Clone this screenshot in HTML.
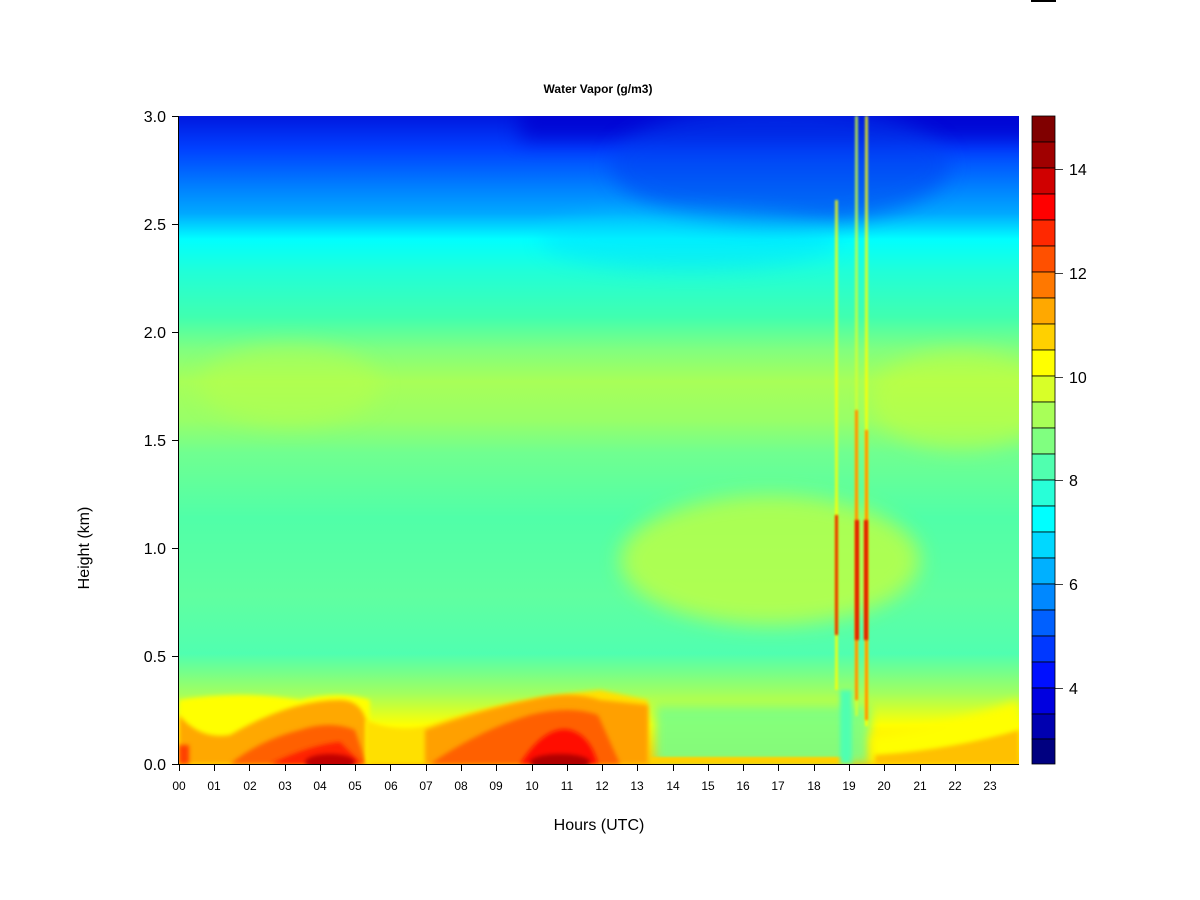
<!DOCTYPE html>
<html><head><meta charset="utf-8"><style>
body{margin:0;background:#fff;width:1200px;height:900px;overflow:hidden;font-family:"Liberation Sans",Arial,sans-serif}
</style></head><body>
<svg width="1200" height="900" xmlns="http://www.w3.org/2000/svg" style="position:absolute;left:0;top:0">
<defs>
<linearGradient id="base" x1="0" y1="0" x2="0" y2="1">
<stop offset="0" stop-color="#0018e0"/>
<stop offset="0.05" stop-color="#0040ff"/>
<stop offset="0.11" stop-color="#0080ff"/>
<stop offset="0.15" stop-color="#00a8ff"/>
<stop offset="0.19" stop-color="#00ffff"/>
<stop offset="0.24" stop-color="#20ffd8"/>
<stop offset="0.31" stop-color="#40ffb0"/>
<stop offset="0.36" stop-color="#80ff80"/>
<stop offset="0.41" stop-color="#a8ff58"/>
<stop offset="0.47" stop-color="#98ff68"/>
<stop offset="0.52" stop-color="#70ff90"/>
<stop offset="0.62" stop-color="#50ffa8"/>
<stop offset="0.74" stop-color="#60ffa0"/>
<stop offset="0.83" stop-color="#50ffb0"/>
<stop offset="0.89" stop-color="#a0ff60"/>
<stop offset="0.94" stop-color="#ffff00"/>
<stop offset="1" stop-color="#ffc000"/>
</linearGradient>
<filter id="b8" x="-50%" y="-150%" width="200%" height="400%"><feGaussianBlur stdDeviation="10"/></filter>
<filter id="b4" x="-20%" y="-50%" width="140%" height="200%"><feGaussianBlur stdDeviation="5"/></filter>
<filter id="b2" x="-50%" y="-50%" width="200%" height="200%"><feGaussianBlur stdDeviation="2"/></filter>
<filter id="b1" x="-80%" y="-20%" width="260%" height="140%"><feGaussianBlur stdDeviation="1"/></filter>
<clipPath id="pc"><rect x="179" y="116" width="840" height="648"/></clipPath>
</defs>
<g clip-path="url(#pc)">
<rect x="179" y="116" width="840" height="648" fill="url(#base)"/>
<rect x="520" y="100" width="520" height="40" fill="#0000d0" filter="url(#b8)" opacity="0.8"/>
<ellipse cx="780" cy="165" rx="170" ry="60" fill="#0040f0" filter="url(#b8)" opacity="0.55"/>
<ellipse cx="690" cy="240" rx="150" ry="30" fill="#00d8ff" filter="url(#b8)" opacity="0.4"/>
<ellipse cx="770" cy="560" rx="150" ry="65" fill="#d0ff30" filter="url(#b8)" opacity="0.7"/>
<ellipse cx="960" cy="400" rx="90" ry="50" fill="#c8ff38" filter="url(#b8)" opacity="0.5"/>
<ellipse cx="290" cy="385" rx="90" ry="40" fill="#b8ff48" filter="url(#b8)" opacity="0.5"/>
<rect x="655" y="705" width="215" height="58" fill="#78ff88" filter="url(#b4)" opacity="0.9"/>
<rect x="650" y="757" width="200" height="7" fill="#ffd000" filter="url(#b1)"/>
<path d="M870 764 L870 735 Q940 728 1019 700 L1019 764 Z" fill="#ffff00" filter="url(#b4)"/>
<path d="M875 764 L875 755 Q950 750 1019 730 L1019 764 Z" fill="#ffc000" filter="url(#b2)"/>
<path d="M179 764 L179 700 Q240 690 300 700 Q340 690 370 700 L370 764 Z" fill="#ffff00" filter="url(#b2)"/>
<path d="M179 764 L179 715 Q200 740 230 735 Q290 700 340 700 Q360 700 366 720 L366 764 Z" fill="#ffa800" filter="url(#b2)"/>
<path d="M230 764 Q260 740 300 730 Q330 720 355 730 L366 764 Z" fill="#ff6000" filter="url(#b2)"/>
<path d="M270 764 Q310 745 340 742 L362 764 Z" fill="#ff2000" filter="url(#b2)"/>
<ellipse cx="330" cy="762" rx="25" ry="8" fill="#c00000" filter="url(#b2)"/>
<path d="M366 764 L366 720 Q400 735 430 725 Q500 700 600 690 L648 700 L648 764 Z" fill="#ffe000" filter="url(#b2)"/>
<path d="M425 764 L425 730 Q480 710 530 700 Q570 690 600 700 L648 705 L648 764 Z" fill="#ffa000" filter="url(#b2)"/>
<path d="M430 764 Q480 730 530 715 Q570 705 598 715 L620 764 Z" fill="#ff6000" filter="url(#b2)"/>
<path d="M520 764 Q545 725 570 730 Q590 735 598 764 Z" fill="#ff1000" filter="url(#b2)"/>
<ellipse cx="560" cy="762" rx="30" ry="8" fill="#b00000" filter="url(#b2)"/>
<rect x="179" y="745" width="10" height="19" fill="#ff4000" filter="url(#b2)"/>
<rect x="835" y="200" width="3" height="490" fill="#ffff00" filter="url(#b1)" opacity="0.8"/>
<rect x="835" y="515" width="3" height="120" fill="#e03000" filter="url(#b1)"/>
<rect x="855" y="116" width="3" height="600" fill="#d0ff30" filter="url(#b1)" opacity="0.8"/>
<rect x="855" y="410" width="3" height="290" fill="#ff9000" filter="url(#b1)"/>
<rect x="855" y="520" width="4" height="120" fill="#e02000" filter="url(#b1)"/>
<rect x="865" y="116" width="3" height="610" fill="#ffff00" filter="url(#b1)" opacity="0.8"/>
<rect x="865" y="430" width="3" height="290" fill="#ff9000" filter="url(#b1)"/>
<rect x="864" y="520" width="4" height="120" fill="#e02000" filter="url(#b1)"/>
<rect x="840" y="690" width="12" height="74" fill="#50ffb0" filter="url(#b2)"/>
</g>
<g stroke="#000" stroke-width="1">
<line x1="178.5" y1="116" x2="178.5" y2="764"/>
<line x1="179" y1="764.5" x2="1019" y2="764.5"/>
<line x1="172" y1="116.5" x2="179" y2="116.5"/>
<line x1="172" y1="224.5" x2="179" y2="224.5"/>
<line x1="172" y1="332.5" x2="179" y2="332.5"/>
<line x1="172" y1="440.5" x2="179" y2="440.5"/>
<line x1="172" y1="548.5" x2="179" y2="548.5"/>
<line x1="172" y1="656.5" x2="179" y2="656.5"/>
<line x1="172" y1="764.5" x2="179" y2="764.5"/>
</g>
<g font-size="16" text-anchor="end" fill="#000">
<text x="166" y="122">3.0</text><text x="166" y="230">2.5</text><text x="166" y="338">2.0</text>
<text x="166" y="446">1.5</text><text x="166" y="554">1.0</text><text x="166" y="662">0.5</text><text x="166" y="770">0.0</text>
</g>
<g stroke="#000">
<path d="M179.5 764v7M214.5 764v7M249.5 764v7M285.5 764v7M320.5 764v7M355.5 764v7M390.5 764v7M426.5 764v7M461.5 764v7M496.5 764v7M532.5 764v7M567.5 764v7M602.5 764v7M637.5 764v7M673.5 764v7M708.5 764v7M743.5 764v7M778.5 764v7M814.5 764v7M849.5 764v7M884.5 764v7M920.5 764v7M955.5 764v7M990.5 764v7"/>
</g>
<g font-size="12" text-anchor="middle" fill="#000">
<text x="179" y="790">00</text><text x="214" y="790">01</text><text x="250" y="790">02</text><text x="285" y="790">03</text><text x="320" y="790">04</text><text x="355" y="790">05</text><text x="391" y="790">06</text><text x="426" y="790">07</text><text x="461" y="790">08</text><text x="496" y="790">09</text><text x="532" y="790">10</text><text x="567" y="790">11</text><text x="602" y="790">12</text><text x="637" y="790">13</text><text x="673" y="790">14</text><text x="708" y="790">15</text><text x="743" y="790">16</text><text x="778" y="790">17</text><text x="814" y="790">18</text><text x="849" y="790">19</text><text x="884" y="790">20</text><text x="920" y="790">21</text><text x="955" y="790">22</text><text x="990" y="790">23</text>
</g>
<text x="599" y="830" font-size="16" text-anchor="middle">Hours (UTC)</text>
<text transform="translate(89,548) rotate(-90)" font-size="16" text-anchor="middle">Height (km)</text>
<text x="598" y="93" font-size="12" font-weight="bold" text-anchor="middle">Water Vapor (g/m3)</text>
<g stroke="#000" stroke-width="0.8">
<rect x="1032" y="116" width="23" height="26" fill="#800000"/>
<rect x="1032" y="142" width="23" height="26" fill="#a00000"/>
<rect x="1032" y="168" width="23" height="26" fill="#d00000"/>
<rect x="1032" y="194" width="23" height="26" fill="#ff0000"/>
<rect x="1032" y="220" width="23" height="26" fill="#ff2800"/>
<rect x="1032" y="246" width="23" height="26" fill="#ff5000"/>
<rect x="1032" y="272" width="23" height="26" fill="#ff7800"/>
<rect x="1032" y="298" width="23" height="26" fill="#ffa800"/>
<rect x="1032" y="324" width="23" height="26" fill="#ffd000"/>
<rect x="1032" y="350" width="23" height="26" fill="#ffff00"/>
<rect x="1032" y="376" width="23" height="26" fill="#d8ff28"/>
<rect x="1032" y="402" width="23" height="26" fill="#a8ff58"/>
<rect x="1032" y="428" width="23" height="26" fill="#80ff80"/>
<rect x="1032" y="454" width="23" height="26" fill="#50ffaf"/>
<rect x="1032" y="480" width="23" height="26" fill="#28ffd8"/>
<rect x="1032" y="506" width="23" height="26" fill="#00ffff"/>
<rect x="1032" y="532" width="23" height="26" fill="#00d8ff"/>
<rect x="1032" y="558" width="23" height="26" fill="#00b0ff"/>
<rect x="1032" y="584" width="23" height="26" fill="#0088ff"/>
<rect x="1032" y="610" width="23" height="26" fill="#0060ff"/>
<rect x="1032" y="636" width="23" height="26" fill="#0038ff"/>
<rect x="1032" y="662" width="23" height="26" fill="#0010ff"/>
<rect x="1032" y="688" width="23" height="26" fill="#0000e0"/>
<rect x="1032" y="714" width="23" height="25" fill="#0000b0"/>
<rect x="1032" y="739" width="23" height="25" fill="#000080"/>
<path d="M1055 169.5h8M1055 273.5h8M1055 377.5h8M1055 480.5h8M1055 584.5h8M1055 688.5h8"/>
</g>
<g font-size="16" fill="#000">
<text x="1069" y="175">14</text><text x="1069" y="279">12</text><text x="1069" y="383">10</text>
<text x="1069" y="486">8</text><text x="1069" y="590">6</text><text x="1069" y="694">4</text>
</g>
<rect x="1031" y="0" width="25" height="2" fill="#000"/>
</svg>
</body></html>
